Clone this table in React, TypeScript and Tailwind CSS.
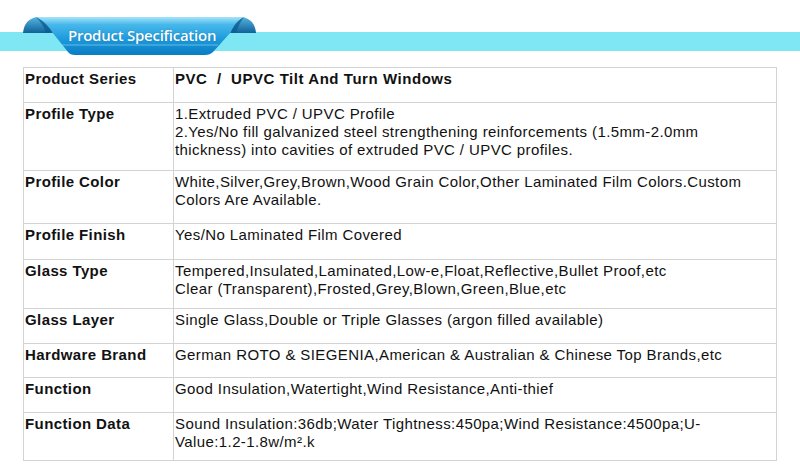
const rows = [
  { label: 'Product Series', h: 35, bold: true, lines: ['PVC  /  UPVC Tilt And Turn Windows'] },
  {
    label: 'Profile Type',
    h: 68,
    lines: [
      '1.Extruded PVC / UPVC Profile',
      '2.Yes/No fill galvanized steel strengthening reinforcements (1.5mm-2.0mm',
      'thickness) into cavities of extruded PVC / UPVC profiles.',
    ],
  },
  {
    label: 'Profile Color',
    h: 53,
    lines: ['White,Silver,Grey,Brown,Wood Grain Color,Other Laminated Film Colors.Custom', 'Colors Are Available.'],
  },
  { label: 'Profile Finish', h: 36, lines: ['Yes/No Laminated Film Covered'] },
  {
    label: 'Glass Type',
    h: 49,
    lines: [
      'Tempered,Insulated,Laminated,Low-e,Float,Reflective,Bullet Proof,etc',
      'Clear (Transparent),Frosted,Grey,Blown,Green,Blue,etc',
    ],
  },
  { label: 'Glass Layer', h: 35, lines: ['Single Glass,Double or Triple Glasses (argon filled available)'] },
  { label: 'Hardware Brand', h: 34, lines: ['German ROTO & SIEGENIA,American & Australian & Chinese Top Brands,etc'] },
  { label: 'Function', h: 35, lines: ['Good Insulation,Watertight,Wind Resistance,Anti-thief'] },
  {
    label: 'Function Data',
    h: 48,
    lines: ['Sound Insulation:36db;Water Tightness:450pa;Wind Resistance:4500pa;U-', 'Value:1.2-1.8w/m².k'],
  },
];

function Ribbon() {
  return (
    <svg className="absolute left-0 top-0" width="270" height="60" viewBox="0 0 270 60">
      <defs>
        <linearGradient id="ribCenter" x1="0" y1="0" x2="0" y2="1">
          <stop offset="0" stopColor="#a6e4f9" />
          <stop offset="0.2" stopColor="#47b8eb" />
          <stop offset="0.6" stopColor="#1b99db" />
          <stop offset="1" stopColor="#0a7cc3" />
        </linearGradient>
        <linearGradient id="ribWing" x1="0" y1="0" x2="0" y2="1">
          <stop offset="0" stopColor="#56b4e1" />
          <stop offset="1" stopColor="#0f6298" />
        </linearGradient>
      </defs>
      <path d="M23,33 C24,24 28,18 38,17 L60,17 L60,33 Z" fill="url(#ribWing)" />
      <path d="M256,33 C255,24 251,18 241,17 L220,17 L220,33 Z" fill="url(#ribWing)" />
      <path
        d="M36,17 L244,17 C238,20 234,25 231,32 L213,52 Q210,55 205,55 L75,55 Q70,55 68,52 L52,32 C48,25 42,20 36,17 Z"
        fill="url(#ribCenter)"
      />
      <path d="M36,17 C42,20 48,25 52,32 L46,33 C44,26 40,21 36,17 Z" fill="#0c5a8c" opacity="0.7" />
      <path d="M244,17 C238,20 234,25 231,32 L236,33 C238,26 241,21 244,17 Z" fill="#0c5a8c" opacity="0.7" />
      <path d="M62,45 L218,45" stroke="#bfeafb" strokeWidth="0.8" opacity="0.6" />
    </svg>
  );
}

export default function App() {
  return (
    <div className="relative w-[800px] h-[476px] bg-white overflow-hidden font-['Liberation_Sans',Arial,sans-serif] text-[#111]">
      <div className="pt-[32px]">
        <div className="h-[19px] bg-[#7fe6f4]" />
      </div>
      <Ribbon />
      <div className="absolute left-[68px] top-[26px] font-['Open_Sans',sans-serif] font-semibold text-[15px] leading-[18px] text-white tracking-[-0.25px] [text-shadow:0_0_1px_rgba(0,60,110,0.5)]">
        Product Specification
      </div>

      <div className="ml-[23px] mt-[16px] w-[754px] border-x border-b border-[#d3d3d3] text-[15px] leading-[18px] tracking-[0.4px]">
        {rows.map((r) => (
          <div key={r.label} className="flex border-t border-[#d3d3d3]" style={{ height: r.h }}>
            <div className="w-[150px] shrink-0 border-r border-[#d3d3d3] pl-[1px] pt-[2px] font-bold">{r.label}</div>
            <div className={`flex-1 pl-[1px] pt-[2px] ${r.bold ? 'font-bold tracking-[0.55px]' : ''}`}>
              {r.lines.map((l, i) => (
                <div key={i} className="whitespace-pre">
                  {l}
                </div>
              ))}
            </div>
          </div>
        ))}
      </div>
    </div>
  );
}
